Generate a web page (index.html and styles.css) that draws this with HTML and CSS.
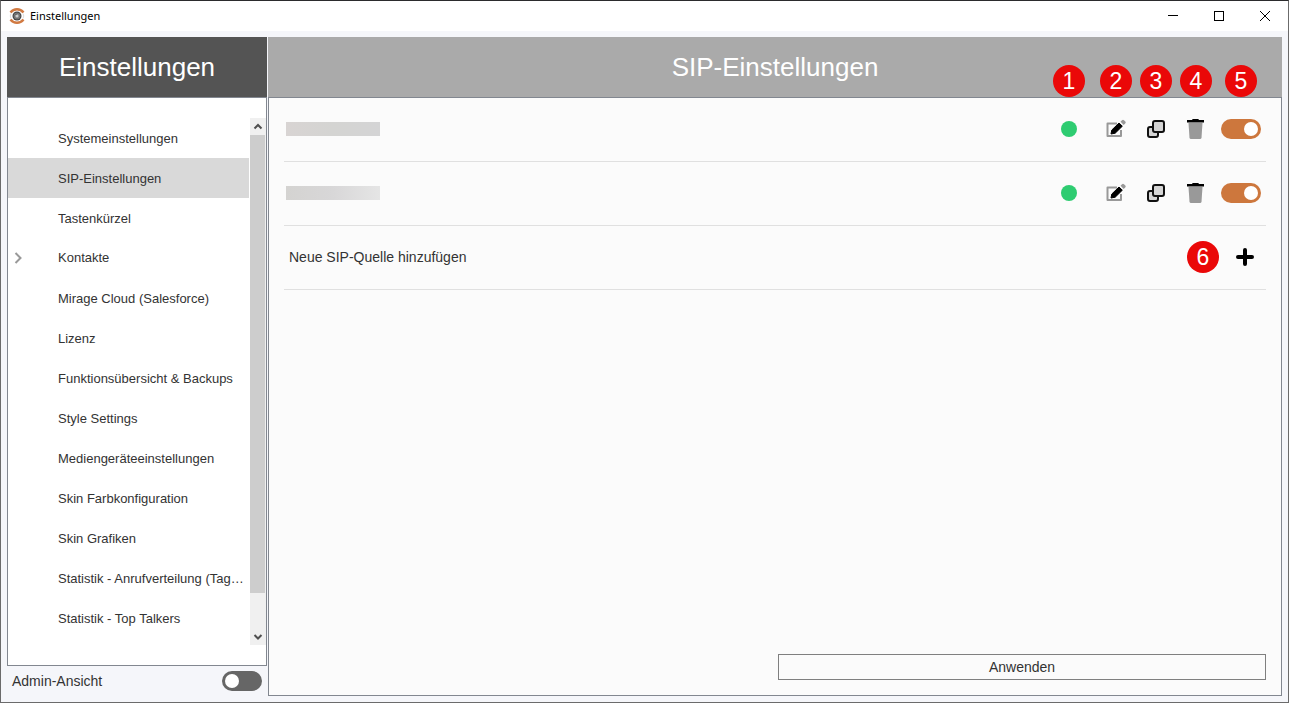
FILE: index.html
```html
<!DOCTYPE html>
<html lang="de">
<head>
  <meta charset="UTF-8" />
  <meta name="viewport" content="width=device-width, initial-scale=1.0" />
  <title>Einstellungen</title>
  <link rel="stylesheet" href="styles.css">
</head>
<body>
  <svg class="symbols" aria-hidden="true">
    <symbol id="icon-edit" viewBox="0 0 20 20">
      <path d="M11 4.500H1.500V17H15V11" fill="none" stroke="#999" stroke-width="2" stroke-linejoin="round" />
      <path d="M5 15L5.800 11L13 4L16.300 7.200L9.200 14.200Z" fill="#000" stroke="#000" stroke-linejoin="round" />
      <path d="M14.500 2.700L16 1.200Q17 .3 18 1.200L19.300 2.500Q20.200 3.500 19.200 4.500L17.700 6Z" fill="#999" />
    </symbol>
    <symbol id="icon-copy" viewBox="0 0 20 20">
      <rect x="2" y="8" width="10" height="10" rx="2" fill="#d5d5d5" stroke="#111" stroke-width="2" />
      <rect x="7" y="2" width="11" height="11" rx="2" fill="#d5d5d5" stroke="#111" stroke-width="2" />
    </symbol>
    <symbol id="icon-trash" viewBox="0 0 20 20">
      <path d="M2.500 4H16.500L15.500 18.700Q15.400 20 14 20H5Q3.600 20 3.500 18.700Z" fill="#999" />
      <path d="M1 1H6L6.700 0H12.300L13 1H18V3.500H1Z" fill="#000" />
    </symbol>
  </svg>

  <div class="window">
    <header class="titlebar">
      <svg class="app-icon" viewBox="0 0 16 16">
        <circle cx="8" cy="8" r="4.500" fill="#444" />
        <circle cx="8" cy="8" r="3" fill="#666" stroke="#777" />
        <path d="M6.500 9.500V7H7.500L8 6.500H9.500V9.500Z" fill="#ccc" />
        <path d="M1.500 4.500Q4 1.200 8 1.200T14.500 4.500" fill="none" stroke="#d17a42" stroke-width="2.400" />
        <path d="M1.500 11.500Q4 14.800 8 14.800T14.500 11.500" fill="none" stroke="#d17a42" stroke-width="2.400" />
        <path d="M2 5.500Q.5 8 2 10.500M14 5.500Q15.500 8 14 10.500" fill="none" stroke="#ddd" />
      </svg>
      <span class="window-title">Einstellungen</span>
      <button class="window-button" aria-label="Minimieren">
        <svg viewBox="0 0 10 10"><path d="M0 4.500H10" /></svg>
      </button>
      <button class="window-button" aria-label="Maximieren">
        <svg viewBox="0 0 10 10"><rect x=".5" y=".5" width="9" height="9" /></svg>
      </button>
      <button class="window-button" aria-label="Schließen">
        <svg viewBox="0 0 10 10"><path d="M0 0L10 10M10 0L0 10" /></svg>
      </button>
    </header>

    <div class="content">
      <aside class="sidebar">
        <h1 class="sidebar-header">Einstellungen</h1>
        <div class="sidebar-body">
          <nav class="menu">
            <a href="#">Systemeinstellungen</a>
            <a href="#" class="active">SIP-Einstellungen</a>
            <a href="#">Tastenkürzel</a>
            <a href="#" class="expandable">
              <svg class="chevron" viewBox="0 0 8 12"><path d="M1.500 1L6.500 6L1.500 11" /></svg>Kontakte</a>
            <a href="#">Mirage Cloud (Salesforce)</a>
            <a href="#">Lizenz</a>
            <a href="#">Funktionsübersicht &amp; Backups</a>
            <a href="#">Style Settings</a>
            <a href="#">Mediengeräteeinstellungen</a>
            <a href="#">Skin Farbkonfiguration</a>
            <a href="#">Skin Grafiken</a>
            <a href="#">Statistik - Anrufverteilung (Tag…</a>
            <a href="#">Statistik - Top Talkers</a>
          </nav>
          <div class="scrollbar">
            <svg viewBox="0 0 16 17"><path d="M4.500 10.500L8 7L11.500 10.500" /></svg>
            <div class="track"><div class="thumb"></div></div>
            <svg viewBox="0 0 16 17"><path d="M4.500 7L8 10.500L11.500 7" /></svg>
          </div>
        </div>
        <div class="admin">
          <label for="adminView">Admin-Ansicht</label>
          <input type="checkbox" id="adminView" class="toggle">
        </div>
      </aside>

      <main class="panel">
        <h2 class="panel-header">SIP-Einstellungen</h2>
        <div class="panel-body">
          <div class="row">
            <span class="source-name"></span>
            <div class="cell status"><span class="dot"></span><span class="badge">1</span></div>
            <div class="cell">
              <button class="icon-button" aria-label="Bearbeiten"><svg><use href="#icon-edit" /></svg></button>
              <span class="badge">2</span>
            </div>
            <div class="cell">
              <button class="icon-button" aria-label="Kopieren"><svg><use href="#icon-copy" /></svg></button>
              <span class="badge">3</span>
            </div>
            <div class="cell">
              <button class="icon-button" aria-label="Löschen"><svg><use href="#icon-trash" /></svg></button>
              <span class="badge">4</span>
            </div>
            <div class="cell switch">
              <input type="checkbox" class="toggle" aria-label="Aktiv" checked>
              <span class="badge">5</span>
            </div>
          </div>
          <div class="row">
            <span class="source-name light"></span>
            <div class="cell status"><span class="dot"></span></div>
            <div class="cell">
              <button class="icon-button" aria-label="Bearbeiten"><svg><use href="#icon-edit" /></svg></button>
            </div>
            <div class="cell">
              <button class="icon-button" aria-label="Kopieren"><svg><use href="#icon-copy" /></svg></button>
            </div>
            <div class="cell">
              <button class="icon-button" aria-label="Löschen"><svg><use href="#icon-trash" /></svg></button>
            </div>
            <div class="cell switch">
              <input type="checkbox" class="toggle" aria-label="Aktiv" checked>
            </div>
          </div>
          <div class="row add-row">
            <span class="add-label">Neue SIP-Quelle hinzufügen</span>
            <span class="number">6</span>
            <button class="add-button" aria-label="Hinzufügen">
              <svg viewBox="0 0 18 18"><path d="M9 2V16M2 9H16" /></svg>
            </button>
          </div>
          <button class="apply">Anwenden</button>
        </div>
      </main>
    </div>
  </div>
</body>
</html>
```

FILE: styles.css
```css
* {
  box-sizing: border-box;
}
body {
  margin: 0;
  font-family: "Liberation Sans", Arial, sans-serif;
  font-size: 14px;
  color: #333;
}
button {
  padding: 0;
  border: none;
  background: none;
  font: inherit;
  color: inherit;
}
svg {
  display: block;
}
.symbols {
  position: absolute;
  width: 0;
  height: 0;
}
.window {
  display: flex;
  flex-direction: column;
  min-height: 100vh;
  border: 1px solid #6b6b6b;
  border-top-color: #2b2b2d;
  background: #f5f6fa;
}

/* Titelleiste */
.titlebar {
  display: flex;
  align-items: center;
  height: 30px;
  padding-left: 8px;
  background: #fff;
}
.app-icon {
  width: 16px;
  height: 16px;
  margin-right: 5px;
}
.window-title {
  flex: 1;
  font-family: "Noto Sans", "Open Sans", sans-serif;
  font-size: 11px;
  line-height: 16px;
  color: #000;
}
.window-button {
  display: flex;
  align-items: center;
  justify-content: center;
  width: 46px;
  height: 30px;
}
.window-button svg {
  width: 10px;
  height: 10px;
  overflow: visible;
  fill: none;
  stroke: #000;
}

.content {
  display: flex;
  flex: 1;
  gap: 1px;
  padding: 6px;
}

/* Seitenleiste */
.sidebar {
  display: flex;
  flex-direction: column;
  width: 260px;
}
.sidebar-header,
.panel-header {
  margin: 0;
  height: 60px;
  font-size: 26px;
  line-height: 60px;
  font-weight: normal;
  text-align: center;
  color: #fff;
}
.sidebar-header {
  background: #545454;
}
.sidebar-body {
  display: flex;
  flex: 1;
  padding: 20px 0;
  border: 1px solid #828790;
  background: #fff;
}
.menu {
  flex: 1;
  min-width: 0;
  margin-right: 1px;
}
.menu a {
  display: block;
  height: 40px;
  padding-left: 50px;
  font-size: 13px;
  line-height: 42px;
  color: #333;
  text-decoration: none;
  white-space: nowrap;
}
.menu .active {
  background: #d9d9d9;
}
.menu .expandable {
  display: flex;
  align-items: center;
  padding-left: 6px;
}
.chevron {
  width: 8px;
  height: 12px;
  margin-right: 36px;
  fill: none;
  stroke: #999;
  stroke-width: 2;
}
.scrollbar {
  display: flex;
  flex-direction: column;
  width: 16px;
  background: #f0f0f0;
}
.scrollbar svg {
  height: 17px;
  fill: none;
  stroke: #505050;
  stroke-width: 2;
}
.track {
  flex: 1;
}
.thumb {
  width: 15px;
  height: 93%;
  background: #cdcdcd;
}
.admin {
  display: flex;
  align-items: center;
  justify-content: space-between;
  height: 30px;
  padding: 0 5px;
}

.toggle {
  appearance: none;
  width: 40px;
  height: 20px;
  margin: 0;
  padding: 3px;
  border-radius: 10px;
  background: #666;
}
.toggle::before {
  content: "";
  display: block;
  width: 14px;
  height: 14px;
  border-radius: 50%;
  background: #fff;
}
.toggle:checked {
  background: #cd773d;
}
.toggle:checked::before {
  margin-left: auto;
}

/* SIP-Quellen */
.panel {
  display: flex;
  flex: 1;
  flex-direction: column;
}
.panel-header {
  background: #aaa;
}
.panel-body {
  display: flex;
  flex: 1;
  flex-direction: column;
  padding: 0 15px 15px;
  border: 1px solid #828790;
  background: #fbfbfb;
}
.row {
  display: flex;
  align-items: center;
  height: 64px;
  padding: 0 5px 2px 2px;
  border-bottom: 1px solid #e0e0e0;
}
.source-name {
  width: 94px;
  height: 14px;
  margin-right: auto;
  background: linear-gradient(to right, #d8d4d3, #d4d4d2, #d4d4d5);
}
.source-name.light {
  background: linear-gradient(to right, #d4d3d1, #d8d7d8, #e5e5e5);
}
.cell {
  position: relative;
  display: flex;
  align-items: center;
  justify-content: center;
  width: 40px;
  height: 60px;
}
.status {
  width: 54px;
}
.switch {
  margin-left: 5px;
}
.dot {
  width: 16px;
  height: 16px;
  border-radius: 50%;
  background: #2ecc71;
}
.icon-button svg {
  width: 20px;
  height: 20px;
}
.badge,
.number {
  width: 32px;
  height: 32px;
  border-radius: 50%;
  background: #ea0808;
  font-size: 23px;
  line-height: 32px;
  text-align: center;
  color: #fff;
}
.badge {
  position: absolute;
  top: -34px;
  left: calc(50% - 16px);
}
.add-row {
  gap: 17px;
  padding: 0 12px 2px 5px;
}
.add-label {
  flex: 1;
}
.add-button svg {
  width: 18px;
  height: 18px;
  fill: none;
  stroke: #000;
  stroke-width: 4;
  stroke-linecap: round;
}
.apply {
  width: calc(50% - 3px);
  height: 26px;
  margin-top: auto;
  margin-left: auto;
  border: 1px solid #7f7f7f;
}
```
